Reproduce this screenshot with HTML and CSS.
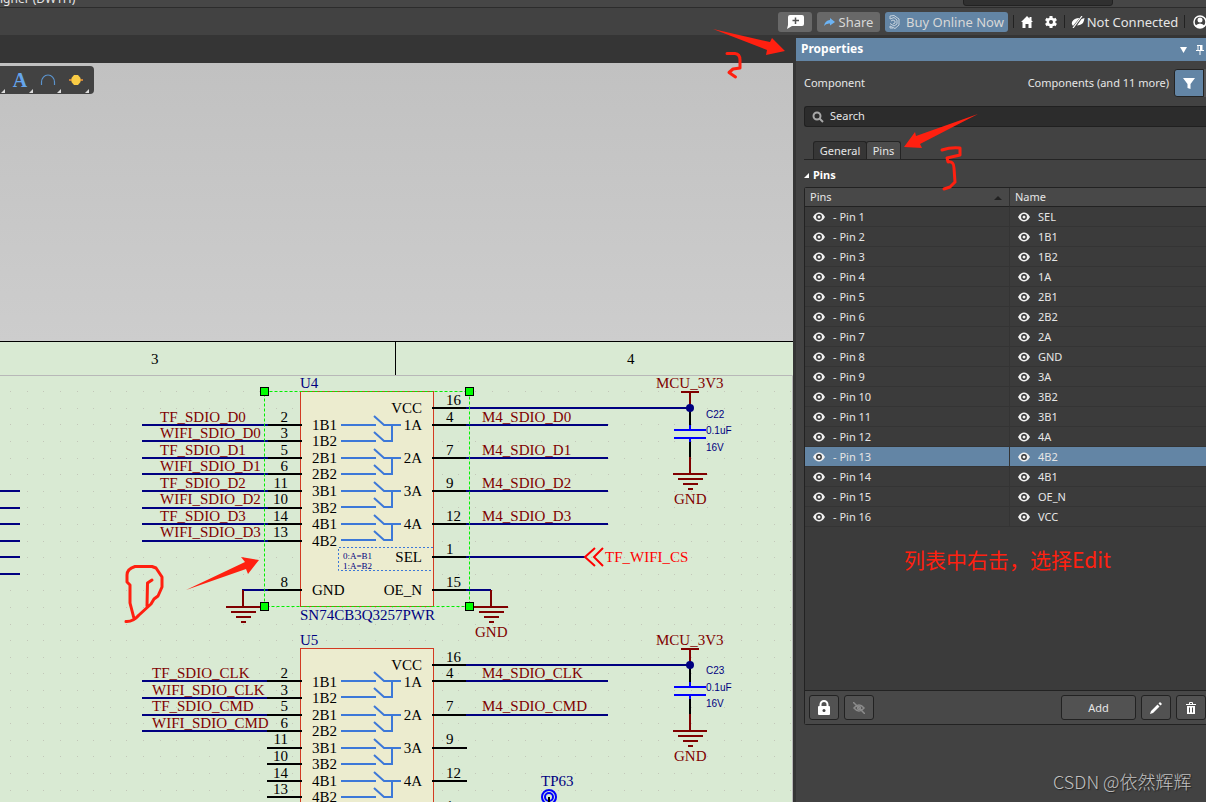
FILE: index.html
```html
<!DOCTYPE html>
<html lang="en">
<head>
<meta charset="utf-8">
<title>Schematic Designer</title>
<link rel="stylesheet" href="styles.css">
</head>
<body>
<svg class="defs" aria-hidden="true">
  <symbol id="eye" viewBox="0 0 12 10"><path d="M0 5C2 1.5 4 0.5 6 .5S10 1.5 12 5C10 8.500 8 9.500 6 9.500S2 8.500 0 5Z" fill="#f2f2f2"/><circle cx="6" cy="5" r="2.900" fill="#333"/><circle cx="6" cy="5" r="1.500" fill="#f2f2f2"/></symbol>
</svg>
<header class="titlebar">
  <span class="app-title">igner (DWTH)</span>
  <span class="title-search"></span>
</header>
<nav class="toolbar">
  <button class="tb-btn comment" aria-label="Add comment"><svg width="17" height="14" viewBox="0 0 17 14"><path d="M3 0H15Q17 0 17 2V9Q17 11 15 11H5L0 14L1 10V2Q1 0 3 0Z" fill="#fff"/><path d="M8.500 2.500V9M5.500 5.500H12" stroke="#555" stroke-width="1.500"/></svg></button>
  <button class="tb-btn share"><svg width="11" height="8" viewBox="0 0 11 8"><path d="M6 0L11 4L6 7.500V5.500Q2 5 0 8Q1 2.500 6 2Z" fill="#6cb4f5"/></svg>Share</button>
  <button class="tb-btn buy"><svg width="12" height="14" viewBox="0 0 12 14" fill="none" stroke="#c7d3de" stroke-width="1"><path d="M1 1L5 .5L10 4V10L6 13.500L1 11M1 4L5 2.500L8 5V9L5 11L1 8.500M2 6L4 5L6 6V8L4 9M1 1V4M1 11V13H4"/></svg>Buy Online Now</button>
  <span class="sep"></span>
  <button class="plain home" aria-label="Home"><svg width="12" height="12" viewBox="0 0 12 12"><path d="M6 0L8.500 2.500V1H10.500V4.500L12 6H10.500V12H7.500V8H4.500V12H1.500V6H0Z" fill="#fff"/></svg></button>
  <button class="plain gear" aria-label="Settings"><svg width="12" height="12" viewBox="-6 -6 12 12"><g fill="#fff"><circle r="4.500"/><rect x="-1.500" y="-6" width="3" height="12"/><rect x="-1.500" y="-6" width="3" height="12" transform="rotate(60)"/><rect x="-1.500" y="-6" width="3" height="12" transform="rotate(120)"/></g><circle r="2" fill="#424242"/></svg></button>
  <span class="sep"></span>
  <button class="plain status"><svg width="14" height="12" viewBox="0 0 14 12"><path d="M1 6Q3 2 8.500 2L2 10Q0 8 1 6ZM10.500 3L13.500 2L13 4.500Q12 9 6 9.500Z" fill="#fff"/><path d="M11 0L2 12" stroke="#fff" stroke-width="1.200"/></svg>Not Connected</button>
  <span class="sep"></span>
  <button class="plain user" aria-label="Account"><svg width="14" height="14" viewBox="0 0 14 14"><circle cx="7" cy="7" r="6" fill="none" stroke="#fff" stroke-width="1.500"/><circle cx="7" cy="5" r="2.500" fill="#fff"/><path d="M2 11Q7 6 12 11L9 13H5Z" fill="#fff"/></svg></button>
</nav>
<main class="workspace">
  <section class="editor">
    <div class="doc-tabs"></div>
    <div class="canvas">
      <svg class="schematic" role="img" aria-label="Schematic sheet">
        <defs>
          <pattern id="grid" x="0" y="391" width="83" height="83" patternUnits="userSpaceOnUse">
            <path id="dotrow" d="M10 .5h1M27 .5h1M43 .5h1M60 .5h1M77 .5h1" stroke="#c3c7b9" stroke-width="1"/>
            <use href="#dotrow" y="17"/><use href="#dotrow" y="33"/><use href="#dotrow" y="50"/><use href="#dotrow" y="67"/>
          </pattern>
          <g id="switch"><path d="M341 0H376M374 -9L384 0H401M392 0V16H384L374 7M341 16H376"/></g>
          <g id="ground"><path d="M0 -17V0M-17 0H17M-12 5H13M-7 10H8M-2 15H3"/></g>
          <g id="supply">
            <path class="red-line" d="M690 -16V0M681 -16H699M690 49V66"/>
            <path class="pin" d="M690 0V18M690 33V49"/>
            <path class="plate" d="M690 17V22M674 22H706M674 30H706M690 30V34"/>
            <circle cx="690" cy="0" r="4" fill="#000080"/>
            <use href="#ground" class="red-line" x="690" y="66"/>
          </g>
        </defs>
        <g transform="translate(0 -63)">
          <rect x="0" y="341" width="100%" height="2000" fill="#d9ead3"/>
          <rect x="0" y="376" width="100%" height="1000" fill="url(#grid)"/>
          <path d="M0 341.500H4000M395.500 341V375" class="frame"/>
          <path d="M0 375.500H792.500V2000" class="zone"/>
          <text x="151" y="364" class="zone-label">3</text><text x="627" y="364" class="zone-label">4</text>

          <g class="part">
            <rect x="300.500" y="391.500" width="133" height="215"/>
            <rect x="300.500" y="648.500" width="133" height="215"/>
          </g>
          <g class="switches">
            <use href="#switch" y="425"/><use href="#switch" y="458"/><use href="#switch" y="491"/><use href="#switch" y="524"/>
            <use href="#switch" y="681"/><use href="#switch" y="715"/><use href="#switch" y="748"/><use href="#switch" y="781"/>
          </g>
          <path class="logic-box" d="M433 547.500H338.500V570.500H433"/>
          <text class="logic" x="343" y="559">0:A=B1</text><text class="logic" x="343" y="569">1:A=B2</text>

          <g class="net">
            <text x="160" y="422">TF_SDIO_D0</text><text x="160" y="438">WIFI_SDIO_D0</text><text x="160" y="455">TF_SDIO_D1</text><text x="160" y="471">WIFI_SDIO_D1</text>
            <text x="160" y="488">TF_SDIO_D2</text><text x="160" y="504">WIFI_SDIO_D2</text><text x="160" y="521">TF_SDIO_D3</text><text x="160" y="537">WIFI_SDIO_D3</text>
            <text x="482" y="422">M4_SDIO_D0</text><text x="482" y="455">M4_SDIO_D1</text><text x="482" y="488">M4_SDIO_D2</text><text x="482" y="521">M4_SDIO_D3</text>
            <text x="152" y="678">TF_SDIO_CLK</text><text x="152" y="695">WIFI_SDIO_CLK</text><text x="152" y="711">TF_SDIO_CMD</text><text x="152" y="728">WIFI_SDIO_CMD</text>
            <text x="482" y="678">M4_SDIO_CLK</text><text x="482" y="711">M4_SDIO_CMD</text>
            <text x="656" y="388">MCU_3V3</text><text x="656" y="645">MCU_3V3</text>
            <text x="674" y="504">GND</text><text x="674" y="761">GND</text><text x="475" y="637">GND</text>
          </g>
          <g class="pin-text">
            <text x="312" y="430">1B1</text><text x="312" y="446">1B2</text><text x="312" y="463">2B1</text><text x="312" y="479">2B2</text>
            <text x="312" y="496">3B1</text><text x="312" y="513">3B2</text><text x="312" y="529">4B1</text><text x="312" y="546">4B2</text><text x="312" y="595">GND</text>
            <text x="312" y="687">1B1</text><text x="312" y="703">1B2</text><text x="312" y="720">2B1</text><text x="312" y="736">2B2</text>
            <text x="312" y="753">3B1</text><text x="312" y="769">3B2</text><text x="312" y="786">4B1</text><text x="312" y="802">4B2</text>
            <text x="446" y="405">16</text><text x="446" y="422">4</text><text x="446" y="455">7</text><text x="446" y="488">9</text><text x="446" y="521">12</text><text x="446" y="554">1</text><text x="446" y="587">15</text>
            <text x="446" y="662">16</text><text x="446" y="678">4</text><text x="446" y="711">7</text><text x="446" y="744">9</text><text x="446" y="778">12</text><text x="446" y="811">1</text>
          </g>
          <g class="pin-text end">
            <text x="288" y="422">2</text><text x="288" y="438">3</text><text x="288" y="455">5</text><text x="288" y="471">6</text>
            <text x="288" y="488">11</text><text x="288" y="504">10</text><text x="288" y="521">14</text><text x="288" y="537">13</text><text x="288" y="587">8</text>
            <text x="288" y="678">2</text><text x="288" y="695">3</text><text x="288" y="711">5</text><text x="288" y="728">6</text>
            <text x="288" y="744">11</text><text x="288" y="761">10</text><text x="288" y="778">14</text><text x="288" y="794">13</text>
            <text x="422" y="413">VCC</text><text x="422" y="430">1A</text><text x="422" y="463">2A</text><text x="422" y="496">3A</text><text x="422" y="529">4A</text><text x="422" y="562">SEL</text><text x="422" y="595">OE_N</text>
            <text x="422" y="670">VCC</text><text x="422" y="687">1A</text><text x="422" y="720">2A</text><text x="422" y="753">3A</text><text x="422" y="786">4A</text>
          </g>
          <g class="designator">
            <text x="300" y="388">U4</text><text x="300" y="620">SN74CB3Q3257PWR</text><text x="300" y="645">U5</text><text x="541" y="786">TP63</text>
          </g>
          <g class="value">
            <text x="706" y="418">C22</text><text x="706" y="434">0.1uF</text><text x="706" y="451">16V</text>
            <text x="706" y="674">C23</text><text x="706" y="691">0.1uF</text><text x="706" y="707">16V</text>
          </g>

          <path class="wire" d="M142 425H268M142 441H268M142 458H268M142 474H268M142 491H268M142 508H268M142 524H268M142 541H268M242 590H268
            M466 408H690M466 425H608M466 458H608M466 491H608M466 524H608M466 557H585M466 590H491
            M142 681H268M142 698H268M142 715H268M142 731H268M466 665H690M466 681H608M466 715H608
            M0 491H20M0 508H20M0 524H20M0 541H20M0 557H20M0 574H20"/>
          <path class="pin" d="M268 425H302M268 441H302M268 458H302M268 474H302M268 491H302M268 508H302M268 524H302M268 541H302M268 590H302
            M432 408H466M432 425H466M432 458H466M432 491H466M432 524H466M432 557H466M432 590H466
            M267 681H302M267 698H302M267 715H302M267 731H302M267 748H302M267 764H302M267 781H302M267 797H302
            M432 665H466M432 681H466M432 715H466M432 748H467M432 781H467"/>
          <use href="#ground" class="red-line" x="243" y="607"/><use href="#ground" class="red-line" x="491" y="607"/>
          <use href="#supply" y="408"/><use href="#supply" y="665"/>
          <path class="port" d="M595 548L585 557L595 566M603 548L594 557L603 566"/>
          <text class="port-name" x="605" y="562">TF_WIFI_CS</text>
          <circle class="plate" cx="549" cy="797" r="7"/><circle class="plate" cx="549" cy="797" r="4"/><path class="pin" d="M549 797V820"/>
          <rect class="selection" x="264.500" y="391.500" width="205" height="215"/>
          <g class="handles"><rect x="260.500" y="387.500" width="8" height="8"/><rect x="465.500" y="387.500" width="8" height="8"/><rect x="260.500" y="602.500" width="8" height="8"/><rect x="465.500" y="602.500" width="8" height="8"/></g>
        </g>
      </svg>
      <div class="active-bar">
        <button aria-label="More"></button>
        <button class="text-tool">A</button>
        <button aria-label="Arc"><svg width="16" height="12" viewBox="0 0 16 12"><path d="M1.500 11V8A6.500 7 0 0 1 14.500 8V11" fill="none" stroke="#5b93cc" stroke-width="1.200"/></svg></button>
        <button aria-label="Junction"><svg width="14" height="10" viewBox="0 0 14 10"><path d="M0 5H14" stroke="#c8813a" stroke-width="2"/><path d="M5 0H9L11.500 3V7L9 10H5L2.500 7V3Z" fill="#f9cc45"/></svg></button>
      </div>
    </div>
  </section>
  <aside class="panel">
    <header class="panel-head"><h1>Properties</h1>
      <svg width="7" height="6" viewBox="0 0 7 6"><path d="M0 0H7L3.500 6Z" fill="#fff"/></svg>
      <svg class="pushpin" width="8" height="10" viewBox="0 0 8 10"><path d="M2 .5V5M1 .5H6M0 5.500H8M4 6V10" stroke="#fff"/><path d="M4 0H6.500V6H4Z" fill="#fff"/></svg>
    </header>
    <div class="object-row"><span>Component</span><span class="scope">Components (and 11 more)</span>
      <button class="filter" aria-label="Filter"><svg width="12" height="11" viewBox="0 0 12 11"><path d="M0 0H12L7.500 6V11L4.500 10V6Z" fill="#fff"/></svg></button><button class="filter-more" aria-label="Filter options"></button></div>
    <label class="search"><svg width="12" height="12" viewBox="0 0 12 12" fill="none" stroke="#a8a8a8" stroke-width="2"><circle cx="5" cy="5" r="3.500"/><path d="M7.500 7.500L11 11"/></svg><input type="text" placeholder="Search" aria-label="Search"></label>
    <div class="tabs"><button>General</button><button class="on">Pins</button></div>
    <h2><svg width="5" height="5" viewBox="0 0 5 5"><path d="M5 0V5H0Z" fill="#fff"/></svg>Pins</h2>
    <div class="pin-box">
      <table>
        <thead><tr><th>Pins<svg width="8" height="4" viewBox="0 0 8 4"><path d="M4 0L8 4H0Z" fill="#222"/></svg></th><th>Name</th></tr></thead>
        <tbody>
          <tr><td><svg class="eye"><use href="#eye"/></svg>- Pin 1</td><td><svg class="eye"><use href="#eye"/></svg>SEL</td></tr>
          <tr><td><svg class="eye"><use href="#eye"/></svg>- Pin 2</td><td><svg class="eye"><use href="#eye"/></svg>1B1</td></tr>
          <tr><td><svg class="eye"><use href="#eye"/></svg>- Pin 3</td><td><svg class="eye"><use href="#eye"/></svg>1B2</td></tr>
          <tr><td><svg class="eye"><use href="#eye"/></svg>- Pin 4</td><td><svg class="eye"><use href="#eye"/></svg>1A</td></tr>
          <tr><td><svg class="eye"><use href="#eye"/></svg>- Pin 5</td><td><svg class="eye"><use href="#eye"/></svg>2B1</td></tr>
          <tr><td><svg class="eye"><use href="#eye"/></svg>- Pin 6</td><td><svg class="eye"><use href="#eye"/></svg>2B2</td></tr>
          <tr><td><svg class="eye"><use href="#eye"/></svg>- Pin 7</td><td><svg class="eye"><use href="#eye"/></svg>2A</td></tr>
          <tr><td><svg class="eye"><use href="#eye"/></svg>- Pin 8</td><td><svg class="eye"><use href="#eye"/></svg>GND</td></tr>
          <tr><td><svg class="eye"><use href="#eye"/></svg>- Pin 9</td><td><svg class="eye"><use href="#eye"/></svg>3A</td></tr>
          <tr><td><svg class="eye"><use href="#eye"/></svg>- Pin 10</td><td><svg class="eye"><use href="#eye"/></svg>3B2</td></tr>
          <tr><td><svg class="eye"><use href="#eye"/></svg>- Pin 11</td><td><svg class="eye"><use href="#eye"/></svg>3B1</td></tr>
          <tr><td><svg class="eye"><use href="#eye"/></svg>- Pin 12</td><td><svg class="eye"><use href="#eye"/></svg>4A</td></tr>
          <tr class="selected"><td><svg class="eye"><use href="#eye"/></svg>- Pin 13</td><td><svg class="eye"><use href="#eye"/></svg>4B2</td></tr>
          <tr><td><svg class="eye"><use href="#eye"/></svg>- Pin 14</td><td><svg class="eye"><use href="#eye"/></svg>4B1</td></tr>
          <tr><td><svg class="eye"><use href="#eye"/></svg>- Pin 15</td><td><svg class="eye"><use href="#eye"/></svg>OE_N</td></tr>
          <tr><td><svg class="eye"><use href="#eye"/></svg>- Pin 16</td><td><svg class="eye"><use href="#eye"/></svg>VCC</td></tr>
        </tbody>
      </table>
      <footer class="actions">
        <button aria-label="Lock"><svg width="12" height="15" viewBox="0 0 12 15"><path d="M2.500 7V4.500A3.500 3.500 0 0 1 9.500 4.500V7" fill="none" stroke="#fff" stroke-width="2"/><rect y="6" width="12" height="9" rx="1" fill="#fff"/><circle cx="6" cy="10.500" r="1.500" fill="#444"/></svg></button>
        <button aria-label="Hide"><svg width="12" height="12" viewBox="0 0 12 12" fill="none" stroke="#8b8b8b" stroke-width="1.500"><path d="M1 6Q6 0 11 6Q6 12 1 6ZM0 0L12 12"/><circle cx="6" cy="6" r="1.500"/></svg></button>
        <button class="add">Add</button>
        <button aria-label="Edit"><svg width="12" height="12" viewBox="0 0 12 12"><path d="M0 12L1 9L7.500 2.500L9.500 4.500L3 11ZM8.500 1.500L10 0L12 2L10.500 3.500Z" fill="#fff"/></svg></button>
        <button aria-label="Delete"><svg width="10" height="12" viewBox="0 0 10 12"><path d="M3.500 2V.5H6.500V2M0 2.500H10" fill="none" stroke="#fff"/><path d="M1 4H9V12H1Z" fill="#fff"/><path d="M3.500 5.500V10.500M6.500 5.500V10.500" stroke="#4a4a4a"/></svg></button>
      </footer>
    </div>
  </aside>
</main>
<svg class="notes" aria-hidden="true">
  <g fill="#ff2010">
    <path d="M713 29L770 42L772 38L785 51L766 55L767 50Z"/>
    <path d="M978 114L920 144L922 148L904 147L915 132L916 136Z"/>
    <path d="M186 590L246 569L248 574L259 560L241 557L245 562Z"/>
  </g>
  <g class="ink">
    <path d="M727 53.500H735Q740 54 740 60V68L733 69L729 72.500L735.500 77"/>
    <path d="M942 150Q951 147 960 148V155L947 158L948 162Q954 161 954 168L955 182L950 187L944 189"/>
    <path d="M126 621.500Q133 622 139 615L151 604L154 599L158 596L162 587V577L156 568L152 566.500H135Q127 569 127 575V582L130 585V603L134 618.500M152 580L147.500 583L147 606"/>
  </g>
  <text class="note" x="904" y="568">列表中右击，选择Edit</text>
  <text class="watermark" x="1053" y="789">CSDN @依然辉辉</text>
</svg>
</body>
</html>
```
FILE: styles.css
```css
* { box-sizing: border-box; }
body { margin: 0; height: 100vh; overflow: hidden; display: flex; flex-direction: column; position: relative; background: #424242; color: #e6e6e6; font: 11px/16px "Noto Sans", "Open Sans", sans-serif; }
button { font: inherit; color: inherit; padding: 0; border: 0; background: none; display: flex; align-items: center; justify-content: center; flex: none; }
.defs { position: absolute; width: 0; height: 0; }
.titlebar { height: 8px; flex: none; background: #464646; border-bottom: 1px solid #2c2c2c; display: flex; justify-content: space-between; align-items: flex-end; overflow: hidden; padding-right: 93px; }
.app-title { font-size: 12px; line-height: 16px; height: 16px; }
.title-search { width: 150px; height: 16px; margin-bottom: 1px; background: #303030; border: 1px solid #222; border-radius: 3px; }
.toolbar { height: 27px; flex: none; display: flex; align-items: center; justify-content: flex-end; font-size: 13px; overflow: hidden; white-space: nowrap; }
.tb-btn { height: 20px; border-radius: 3px; background: #686868; margin-right: 5px; color: #d8d8d8; }
.comment { width: 34px; }
.share { width: 63px; gap: 4px; }
.buy { width: 123px; gap: 5px; background: #6385a5; }
.sep { width: 1px; height: 13px; background: #222; }
.home { width: 26px; }
.gear { width: 22px; margin-right: 2px; }
.status { width: 119px; gap: 2px; }
.user { width: 20px; margin-right: -4px; margin-left: 5px; }
.workspace { flex: 1; min-height: 0; display: flex; }
.editor { flex: 1; min-width: 0; display: flex; flex-direction: column; background: #353535; }
.doc-tabs { height: 28px; flex: none; }
.canvas { flex: 1; position: relative; overflow: hidden; margin-right: 3px; background: linear-gradient(#c1c1c1, #cdcdcd 278px); }
.schematic { display: block; width: 100%; height: 100%; }
.active-bar { position: absolute; left: 0; top: 3px; height: 28px; width: 94px; overflow: hidden; display: flex; justify-content: flex-end; padding-right: 4px; background: #424242; border-radius: 0 4px 4px 0; }
.active-bar button { width: 28px; position: relative; }
.active-bar button::after { content: ""; position: absolute; right: 1px; bottom: 1px; border: 2px solid #ddd; border-left-color: transparent; border-top-color: transparent; }
.text-tool { color: #65a5ec; font: bold 20px/26px "Liberation Serif", serif; }

.frame { stroke: #000; fill: none; }
.zone { stroke: #b8b8b8; fill: none; }
.schematic text { font: 15px "Liberation Serif", serif; }
.part rect { fill: #ececcf; stroke: #d23a22; }
.switches { fill: none; stroke: #3c78d8; stroke-width: 2; }
.logic-box { fill: none; stroke: #3c78d8; stroke-dasharray: 2 2; }
.schematic .logic { font-size: 9px; fill: #000080; }
.net { fill: #800000; }
.pin-text { fill: #000; }
.end { text-anchor: end; }
.designator { fill: #000080; }
.schematic .value text { font: 10px "Liberation Sans", sans-serif; fill: #000080; }
.wire { fill: none; stroke: #000080; stroke-width: 2; }
.pin { fill: none; stroke: #000; stroke-width: 2; }
.red-line { fill: none; stroke: #800000; stroke-width: 2; }
.plate { fill: none; stroke: #0000ff; stroke-width: 2; }
.port { fill: none; stroke: #ff0000; stroke-width: 2; }
.port-name { fill: #ff0000; }
.selection { fill: none; stroke: #00f000; stroke-dasharray: 3 2; }
.handles rect { fill: #00ff00; stroke: #000; }

.panel { width: 410px; flex: none; display: flex; flex-direction: column; padding: 3px 0 77px; background: #424242; overflow: hidden; box-shadow: inset 0 3px #353535; }
.panel-head { height: 23px; flex: none; background: #6385a5; display: flex; align-items: center; padding: 0 2px 0 5px; gap: 9px; }
h1 { font-size: 12px; line-height: 20px; margin: 0 0 2px; flex: 1; color: #fff; }
.object-row { display: flex; align-items: center; padding-left: 8px; margin-top: 8px; height: 28px; flex: none; }
.scope { margin-left: auto; margin-right: 5px; }
.filter { width: 30px; height: 28px; background: #6385a5; border: 1px solid #242424; border-radius: 3px 0 0 3px; }
.filter-more { width: 2px; height: 28px; background: #555; }
.search { display: flex; align-items: center; gap: 6px; height: 21px; flex: none; margin: 9px 0 0 8px; padding-left: 7px; background: #2c2c2c; border: 1px solid #202020; border-right: 0; border-radius: 3px 0 0 3px; }
.search input { flex: 1; min-width: 0; border: 0; padding: 0 0 2px; background: none; color: #e6e6e6; font: inherit; outline: 0; }
.search input::placeholder { color: #e6e6e6; opacity: 1; }
.tabs { display: flex; height: 19px; flex: none; margin: 14px 0 0 8px; padding-left: 9px; border-bottom: 1px solid #242424; }
.tabs button { width: 54px; background: #363636; border: 1px solid #242424; border-bottom: 0; border-radius: 3px 3px 0 0; }
.tabs .on { width: 35px; margin-left: -1px; background: #4c4c4c; }
h2 { font-size: 11px; line-height: 16px; margin: 7px 0 4px 8px; flex: none; color: #fff; display: flex; align-items: center; gap: 4px; }
.pin-box { flex: 1; min-height: 0; margin-left: 8px; background: #3b3b3b; border: 1px solid #222; border-right: 0; border-radius: 3px 0 0 3px; display: flex; flex-direction: column; }
table { width: 100%; table-layout: fixed; border-collapse: separate; border-spacing: 0; }
th, td { height: 20px; padding: 0 0 0 8px; line-height: 18px; text-align: left; font-weight: normal; border-bottom: 1px solid #343434; white-space: nowrap; }
th { height: 19px; background: #484848; border-bottom-color: #222; padding-left: 5px; }
th:first-child { width: 205px; border-right: 1px solid #303030; }
th:first-child svg { float: right; margin: 8px 7px 0 0; }
td:first-child { border-right: 1px solid #343434; }
.eye { width: 12px; height: 10px; vertical-align: -1px; margin-right: 8px; }
.selected td { background: #6385a5; }
.actions { margin-top: auto; height: 34px; display: flex; align-items: center; gap: 5px; padding-left: 4px; background: #484848; border-top: 1px solid #222; }
.actions button { width: 30px; height: 25px; background: #525252; border: 1px solid #222; border-radius: 3px; }
.actions .add { width: 75px; margin-left: auto; }
.notes { position: absolute; inset: 0; width: 100%; height: 100%; pointer-events: none; }
.ink { fill: none; stroke: #ff2010; stroke-width: 3; stroke-linecap: round; stroke-linejoin: round; }
.note { font: 21px "Noto Sans CJK SC", sans-serif; fill: #ff2010; }
.watermark { font: 18px "Noto Sans CJK SC", sans-serif; font-weight: 300; fill: #c0c0c0; text-shadow: 1px 1px 1px #222; }
```
